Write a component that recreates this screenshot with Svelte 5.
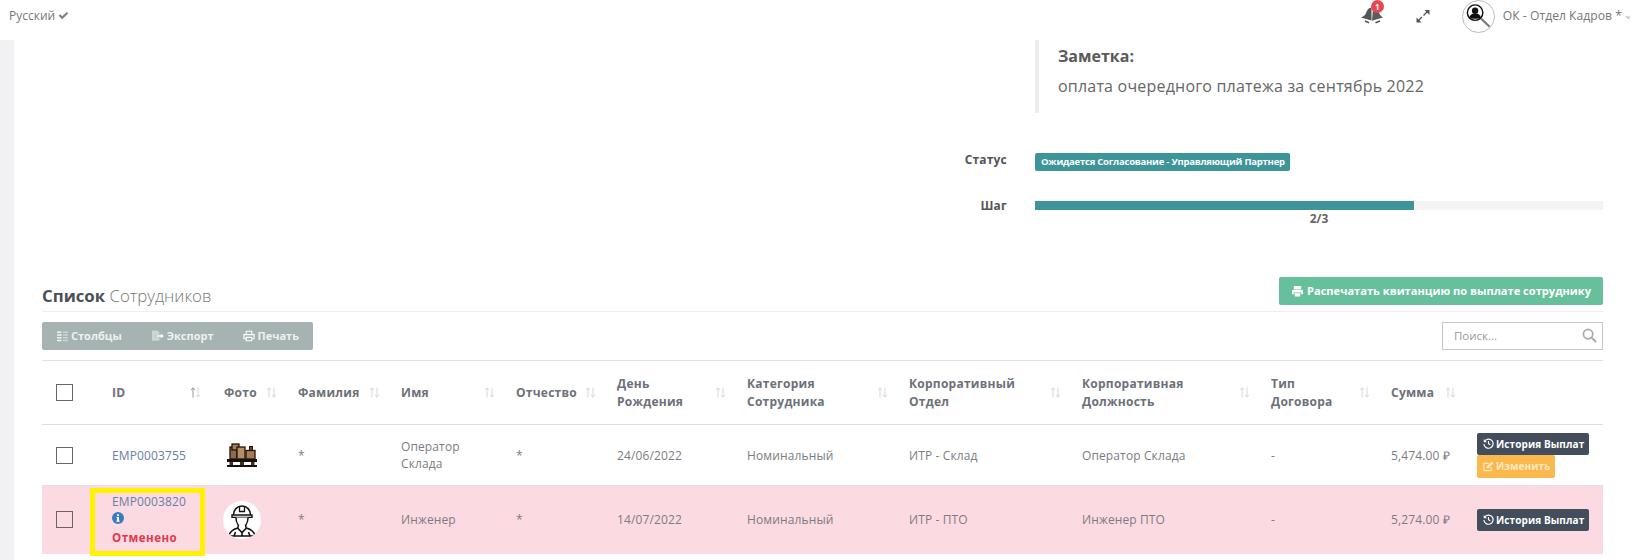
<script>
	// Employee payment detail page: summary block on top, employee list below.
	const columns = [
		{ w: 56 },
		{ w: 112, label: ["ID"], sort: true, active: true },
		{ w: 74, label: ["Фото"], sort: true },
		{ w: 103, label: ["Фамилия"], sort: true },
		{ w: 115, label: ["Имя"], sort: true },
		{ w: 101, label: ["Отчество"], sort: true },
		{ w: 130, label: ["День", "Рождения"], sort: true },
		{ w: 162, label: ["Категория", "Сотрудника"], sort: true },
		{ w: 173, label: ["Корпоративный", "Отдел"], sort: true },
		{ w: 189, label: ["Корпоративная", "Должность"], sort: true },
		{ w: 120, label: ["Тип", "Договора"], sort: true },
		{ w: 86, label: ["Сумма"], sort: true },
		{ w: 140 }
	];

	const rows = [
		{
			id: "EMP0003755",
			photo: "boxes",
			name: ["Оператор", "Склада"],
			birth: "24/06/2022",
			category: "Номинальный",
			dept: "ИТР - Склад",
			role: "Оператор Склада",
			sum: "5,474.00 ₽",
			canEdit: true
		},
		{
			id: "EMP0003820",
			photo: "engineer",
			name: ["Инженер"],
			birth: "14/07/2022",
			category: "Номинальный",
			dept: "ИТР - ПТО",
			role: "Инженер ПТО",
			sum: "5,274.00 ₽",
			cancelled: true
		}
	];
</script>

<header class="topbar">
	<div class="lang">
		Русский
		<svg class="tick" viewBox="0 0 12 10" width="11" height="9"><path d="M1.500 4.500l3 3 6-5.500" fill="none" stroke="#808080" stroke-width="2.400" /></svg>
	</div>
	<div class="top-right">
		<span class="bell">
			<svg viewBox="0 0 24 20" width="24" height="20">
				<path d="M11.500 2.500C8.500 2.800 7 5 6 8c-.7 2-2 3.300-5 4.500l10.500 3z" fill="#555" />
				<path d="M13 3c2.700-.6 5 1 5.700 3.800.6 2.300 1.700 4 4.300 5.700l-11 3.200z" fill="#5c5c5c" />
				<path d="M5 16l4 1.700M15.500 17.700l4.500-1.700" stroke="#555" stroke-width="1.500" />
			</svg>
			<span class="badge">1</span>
		</span>
		<svg class="expand" viewBox="0 0 14 14" width="14" height="14">
			<path d="M7.500 6.500l4-4" stroke="#555" stroke-width="1.300" />
			<path d="M8.500 1H13.500v5z" fill="#555" />
			<path d="M6 8l-3.500 3.500" stroke="#555" stroke-width="1.300" />
			<path d="M5.500 13.500H.5v-5z" fill="#555" />
		</svg>
		<span class="avatar">
			<svg viewBox="0 0 32 32" width="32" height="32">
				<circle cx="12.500" cy="11.500" r="8" fill="#fff" stroke="#111" stroke-width="1.500" />
				<circle cx="12.500" cy="9.500" r="3.300" fill="#111" />
				<path d="M6.500 16.500c1-3 3.200-4 6-4s5 1 6 4c-3.500 1.800-8.500 1.800-12 0z" fill="#111" />
				<path d="M18.500 17.500l9 8.500" stroke="#777" stroke-width="2.200" />
			</svg>
		</span>
		<span class="user">ОК - Отдел Кадров *</span>
		<svg class="tick user-tick" viewBox="0 0 12 10" width="9" height="8"><path d="M1.500 5l3 3 6-6.500" fill="none" stroke="#c4c4c4" stroke-width="2" /></svg>
	</div>
</header>

<div class="page">
	<aside class="strip"></aside>
	<main class="content">
		<section class="summary">
			<blockquote class="note">
				<h4>Заметка:</h4>
				<p>оплата очередного платежа за сентябрь 2022</p>
			</blockquote>
			<div class="info-row status-row">
				<span class="info-label">Статус</span>
				<span class="status">Ожидается Согласование - Управляющий Партнер</span>
			</div>
			<div class="info-row step-row">
				<span class="info-label">Шаг</span>
				<div class="step">
					<div class="track"><div class="fill" style="width: 66.8%"></div></div>
					<div class="step-text">2/3</div>
				</div>
			</div>
		</section>

		<div class="list-head">
			<h3><b>Список</b> Сотрудников</h3>
			<button class="print-receipt">
				<svg viewBox="0 0 14 13" width="13" height="12">
					<path d="M3 5V1h8v4zM1 5.500h12V10h-2V8H3v2H1zM4 9h6v3.500H4z" fill="#fff" />
				</svg>
				Распечатать квитанцию по выплате сотруднику
			</button>
		</div>

		<div class="tools">
			<div class="btn-group">
				<button>
					<svg viewBox="0 0 12 12" width="11" height="12"><path d="M0 1h5v1.600H0zM0 4h5v1.600H0zM0 7h5v1.600H0zM0 10h5v1.600H0z" fill="#f1f3f3" /><path d="M6.500 1H12v1.600H6.500zM6.500 4H12v1.600H6.500zM6.500 7H12v1.600H6.500zM6.500 10H12v1.600H6.500z" fill="#ccd4d4" /></svg>
					Столбцы
				</button>
				<button>
					<svg viewBox="0 0 14 12" width="13" height="12"><path d="M1 0h6l2 2v3H5v2h4v4H1z" fill="#ccd4d4" /><path d="M6 5.200h4.500V3.500L14 6l-3.500 2.500V6.800H6z" fill="#fff" /></svg>
					Экспорт
				</button>
				<button>
					<svg viewBox="0 0 13 12" width="12" height="12"><path d="M3.500 4V.8h6V4M3 9H1V4.500h11V9h-2M3.500 7.500h6v3.700h-6z" fill="none" stroke="#fff" stroke-width="1.200" /></svg>
					Печать
				</button>
			</div>
			<div class="search">
				<span>Поиск...</span>
				<svg viewBox="0 0 16 16" width="15" height="15"><circle cx="6.500" cy="6.500" r="5" fill="none" stroke="#aaa" stroke-width="1.800" /><path d="M10 10l5 5" stroke="#aaa" stroke-width="2.200" /></svg>
			</div>
		</div>

		<table>
			<colgroup>
				{#each columns as col}
					<col style="width: {col.w}px" />
				{/each}
			</colgroup>
			<thead>
				<tr>
					{#each columns as col, i}
						<th class:id-head={col.active}>
							{#if i === 0}
								<span class="check"></span>
							{:else if col.label}
								<div class="th-inner">
									<span>{#each col.label as line}<div>{line}</div>{/each}</span>
									<svg class="sort" viewBox="0 0 11 11" width="11" height="11">
										<path d="M3 10.500V1M1 3.200L3 .8l2 2.400" fill="none" stroke={col.active ? "#8f9aa0" : "#d5d8da"} />
										<path d="M8 .5V10M6 7.800l2 2.400 2-2.400" fill="none" stroke="#d5d8da" />
									</svg>
								</div>
							{/if}
						</th>
					{/each}
				</tr>
			</thead>
			<tbody>
				{#each rows as row}
					<tr class:cancelled={row.cancelled}>
						<td><span class="check"></span></td>
						<td class="id-cell">
							<div class="emp-id">{row.id}</div>
							{#if row.cancelled}
								<svg class="info" viewBox="0 0 12 12" width="12" height="12">
									<circle cx="6" cy="6" r="6" fill="#3a7bbf" />
									<rect x="5" y="2.300" width="2" height="1.800" fill="#fff" />
									<path d="M4.500 5h2.500v3.700h.8v1H4.300v-1H5V6h-.5z" fill="#fff" />
								</svg>
								<div class="cancel-text">Отменено</div>
								<div class="marker"></div>
							{/if}
						</td>
						<td>
							{#if row.photo === "boxes"}
								<span class="photo soft">
									<svg viewBox="0 0 32 24" width="32" height="24">
										<rect x="4" y="4" width="7" height="12" fill="#8f6a4a" stroke="#24150c" stroke-width="1.300" />
										<rect x="6" y="1" width="7" height="6" fill="#a5805a" stroke="#24150c" stroke-width="1.300" />
										<rect x="11" y="4" width="8" height="12" fill="#b48f66" stroke="#24150c" stroke-width="1.300" />
										<rect x="20" y="7.500" width="9" height="8.500" fill="#a67c52" stroke="#24150c" stroke-width="1.300" />
										<rect x="23.500" y="3.500" width="3" height="4" fill="#7a3f20" stroke="#24150c" stroke-width="1" />
										<path d="M1 16h30v3H1z" fill="#111" />
										<path d="M1 22h30v2H1z" fill="#111" />
										<path d="M3.500 19h3.500v3H3.500zM14 19h4v3h-4zM25 19h3.500v3H25z" fill="#4a2c18" />
									</svg>
								</span>
							{:else}
								<span class="photo">
									<svg viewBox="0 0 32 34" width="32" height="34">
										<path d="M7.500 12c0-5 3.500-9 8.500-9s8.500 4 8.500 9" fill="#fff" stroke="#111" stroke-width="1.500" />
										<path d="M13.500 3.500V8.500h5V3.500" fill="none" stroke="#111" stroke-width="1.300" />
										<path d="M6 12h20v2.400H6z" fill="#fff" stroke="#111" stroke-width="1.400" />
										<path d="M10 14.500c0 5.500 2.500 9 6 9s6-3.500 6-9" fill="#fff" stroke="#111" stroke-width="1.500" />
										<path d="M12.500 22l-.7 3C7 26.200 3.800 28.500 3 33h26c-.8-4.500-4-6.800-8.800-8l-.7-3" fill="#fff" stroke="#111" stroke-width="1.500" />
										<path d="M11.500 25l4.500 4.500 4.500-4.500M16 29.500V33M8 33l1.500-4M24 33l-1.500-4" fill="none" stroke="#111" stroke-width="1.600" />
									</svg>
								</span>
							{/if}
						</td>
						<td>*</td>
						<td>{#each row.name as line}<div>{line}</div>{/each}</td>
						<td>*</td>
						<td>{row.birth}</td>
						<td>{row.category}</td>
						<td>{row.dept}</td>
						<td>{row.role}</td>
						<td>-</td>
						<td>{row.sum}</td>
						<td class="actions">
							<button class="history">
								<svg viewBox="0 0 12 12" width="11" height="11"><path d="M2.300 2.800A5 5 0 1 1 1 6.500" fill="none" stroke="#fff" stroke-width="1.300" /><path d="M.8 1v3.500h3.500z" fill="#fff" /><path d="M6 3.200v3l2 1.200" fill="none" stroke="#fff" stroke-width="1.200" /></svg>
								История Выплат
							</button>
							{#if row.canEdit}
								<button class="edit">
									<svg viewBox="0 0 12 12" width="11" height="11"><path d="M9 7v3.500H1V2.500h5" fill="none" stroke="#fde9c4" stroke-width="1.300" /><path d="M4 6l5.500-5.500 2 2L6 8H4z" fill="#fde9c4" /></svg>
									Изменить
								</button>
							{/if}
						</td>
					</tr>
				{/each}
			</tbody>
		</table>
	</main>
</div>

<style>
	:global(body) {
		margin: 0;
		background: #fff;
		font-family: "Open Sans", "Liberation Sans", sans-serif;
		color: #74757a;
		overflow: hidden;
	}

	button {
		font-family: inherit;
		border: 0;
		cursor: pointer;
	}

	.topbar {
		height: 40px;
		display: flex;
		justify-content: space-between;
		align-items: flex-start;
		font-size: 12px;
		color: #777;
	}

	.lang {
		margin: 7px 0 0 9px;
		line-height: 18px;
	}

	.top-right {
		display: flex;
		align-items: flex-start;
	}

	.bell {
		position: relative;
		margin: 5px 0 0 0;
		height: 20px;
	}

	.badge {
		position: absolute;
		top: -5px;
		left: 11px;
		width: 13px;
		height: 13px;
		border-radius: 50%;
		background: #e8474f;
		color: #fff;
		font-size: 8px;
		font-weight: 700;
		line-height: 13px;
		text-align: center;
	}

	.expand {
		margin: 9px 0 0 32px;
	}

	.avatar {
		width: 31px;
		height: 31px;
		margin: 0 0 0 32px;
		border: 1px solid #bbb;
		border-radius: 50%;
		display: flex;
		align-items: center;
		justify-content: center;
		overflow: hidden;
	}

	.user {
		margin: 7px 0 0 8px;
		font-size: 12.200px;
		line-height: 18px;
		white-space: nowrap;
	}

	.user-tick {
		margin: 12px -4px 0 3px;
	}

	.page {
		display: flex;
		height: 520px;
	}

	.strip {
		width: 14px;
		flex: none;
		background: #f1f1f3;
	}

	.content {
		flex: 1;
		min-width: 0;
		padding: 0 27px 0 28px;
	}

	.summary {
		padding-left: 993px;
		height: 250px;
	}

	.note {
		margin: 0;
		height: 73px;
		box-sizing: border-box;
		border-left: 4px solid #eee;
		padding: 4px 0 0 19px;
		color: #666;
	}

	.note h4 {
		margin: 0;
		font-size: 16px;
		font-weight: 700;
		line-height: 24px;
		color: #5a5a5a;
	}

	.note p {
		margin: 6px 0 0;
		font-size: 16px;
		letter-spacing: 0.2px;
		line-height: 24px;
		white-space: nowrap;
	}

	.info-row {
		display: flex;
		margin-left: -120px;
	}

	.info-label {
		width: 92px;
		margin-right: 28px;
		text-align: right;
		font-size: 12px;
		font-weight: 700;
		letter-spacing: 0.2px;
		color: #555;
		line-height: 16px;
		flex: none;
	}

	.status-row {
		margin-top: 39px;
	}

	.status {
		background: #3d9499;
		color: #fff;
		font-size: 9.500px;
		font-weight: 700;
		letter-spacing: -0.23px;
		line-height: 18px;
		height: 18px;
		padding: 0 5px 0 6px;
		border-radius: 2px;
		white-space: nowrap;
		margin-top: 1px;
	}

	.step-row {
		margin-top: 30px;
	}

	.step-row .info-label {
		margin-top: -3px;
	}

	.step {
		flex: 1;
	}

	.track {
		height: 9px;
		background: #f3f3f3;
	}

	.fill {
		height: 100%;
		background: #3d9499;
	}

	.step-text {
		text-align: center;
		font-size: 12px;
		font-weight: 700;
		color: #666;
		line-height: 18px;
	}

	.list-head {
		display: flex;
		justify-content: space-between;
		align-items: flex-start;
		border-bottom: 1px solid #eee;
		margin-top: -13px;
		height: 34px;
	}

	.list-head h3 {
		margin: 8px 0 0;
		font-size: 16.800px;
		font-weight: 300;
		line-height: 22px;
		color: #777;
	}

	.list-head b {
		font-weight: 700;
		color: #4a4f57;
	}

	.print-receipt {
		display: flex;
		align-items: center;
		gap: 3px;
		height: 28px;
		width: 324px;
		justify-content: center;
		background: #66c09b;
		color: #fff;
		font-size: 11.100px;
		font-weight: 700;
		line-height: 26px;
		padding-bottom: 2px;
		border-radius: 2px;
	}

	.tools {
		display: flex;
		justify-content: space-between;
		margin-top: 10px;
		height: 28px;
	}

	.btn-group {
		display: flex;
		width: 271px;
		background: #a6b3b3;
		border-radius: 2px;
		padding: 0 0 1px 15px;
		box-sizing: border-box;
		gap: 29px;
	}

	.btn-group button {
		display: flex;
		align-items: center;
		gap: 3px;
		padding: 0;
		background: none;
		color: #eef1f1;
		font-size: 11px;
		font-weight: 700;
	}

	.search {
		width: 161px;
		box-sizing: border-box;
		border: 1px solid #c8c8c8;
		display: flex;
		align-items: center;
		justify-content: space-between;
		padding: 0 5px 1px 11px;
		font-size: 11.500px;
		color: #999;
	}

	table {
		margin-top: 10px;
		border-collapse: collapse;
		table-layout: fixed;
		width: 1561px;
		border-top: 1px solid #e2e2e2;
	}

	th {
		height: 64px;
		padding: 0 7px 0 14px;
		text-align: left;
		font-size: 12px;
		font-weight: 700;
		line-height: 18px;
		letter-spacing: 0.25px;
		color: #6c7079;
		border-bottom: 1px solid #ddd;
		box-sizing: border-box;
	}

	th.id-head {
		padding-right: 9px;
	}

	.th-inner {
		display: flex;
		align-items: center;
		justify-content: space-between;
		white-space: nowrap;
	}

	.sort {
		flex: none;
	}

	td {
		padding: 0 7px 0 14px;
		height: 61px;
		font-size: 12px;
		line-height: 17px;
		letter-spacing: 0.12px;
		color: #7b7c82;
		box-sizing: border-box;
		border-bottom: 1px solid #e2e2e2;
		white-space: nowrap;
	}

	tr.cancelled td {
		height: 68px;
		background: #fbdbe1;
		border-bottom: 0;
	}

	.check {
		display: block;
		width: 15px;
		height: 15px;
		border: 1px solid #666;
		background: #fff;
	}

	tr.cancelled .check {
		background: #fbdbe1;
	}

	.emp-id {
		color: #6680a6;
	}

	.id-cell {
		position: relative;
	}

	.info {
		display: block;
		margin-top: 2px;
	}

	.cancel-text {
		margin-top: 5px;
		font-size: 11.500px;
		font-weight: 700;
		letter-spacing: 0.5px;
		color: #e0384f;
	}

	/* yellow annotation drawn over the screenshot */
	.marker {
		position: absolute;
		left: -8px;
		top: 2px;
		width: 115px;
		height: 68px;
		box-sizing: border-box;
		border: 5px solid #fff200;
	}

	.photo {
		display: flex;
		width: 38px;
		height: 38px;
		border-radius: 50%;
		background: #fff;
		align-items: center;
		justify-content: center;
		margin-left: -1px;
		overflow: hidden;
	}

	.photo.soft {
		background: #fdfdfe;
	}

	.actions button {
		display: flex;
		align-items: center;
		gap: 2px;
		height: 22px;
		padding: 0 5px 0 6px;
		color: #fff;
		font-size: 10px;
		font-weight: 700;
		border-radius: 2px;
		letter-spacing: 0.1px;
	}

	.history {
		background: #434d5b;
	}

	.actions .edit {
		background: #fbb84d;
		color: #fde9c4;
		height: 23px;
	}
</style>
